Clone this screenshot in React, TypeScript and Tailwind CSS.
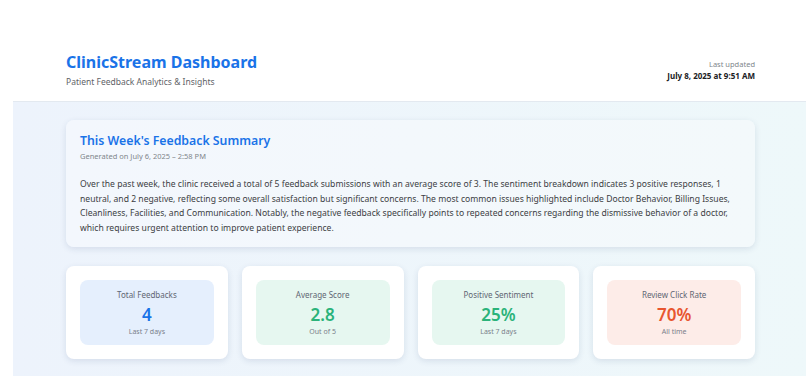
import React from "react";

const font = { fontFamily: '"Noto Sans", "Open Sans", sans-serif' };

function Stat({ label, value, sub, box, color }: { label: string; value: string; sub: string; box: string; color: string }) {
  return (
    <div className="bg-white rounded-lg shadow-[0_2px_6px_rgba(30,60,110,0.12)] p-[14px]">
      <div className={`${box} rounded-lg h-[65px] flex flex-col items-center justify-center`}>
        <div className="text-[8px] text-[#5f6673] leading-[10px]">{label}</div>
        <div className={`${color} text-[17px] font-semibold leading-[22px] mt-[4px]`}>{value}</div>
        <div className="text-[7px] text-[#7a808a] leading-[9px] mt-[1px]">{sub}</div>
      </div>
    </div>
  );
}

export default function App() {
  return (
    <div className="w-[806px] h-[386px] bg-white overflow-hidden" style={font}>
      <header className="h-[101px] flex items-end justify-between pl-[66px] pr-[51px] pb-[13px]">
        <div>
          <h1 className="text-[16px] font-bold text-[#1a73e8] leading-[22px]">ClinicStream Dashboard</h1>
          <p className="text-[8.5px] text-[#5f6368] leading-[12px] mt-[3px]">Patient Feedback Analytics &amp; Insights</p>
        </div>
        <div className="text-right pb-[7px]">
          <div className="text-[7.5px] text-[#80868b] leading-[11px]">Last updated</div>
          <div className="text-[8px] font-bold text-[#202124] leading-[11px]">July 8, 2025 at 9:51 AM</div>
        </div>
      </header>
      <main className="ml-[13px] h-[275px] bg-gradient-to-r from-[#edf3fc] to-[#eef8fa] border-t border-[#e3e9f0] pt-[18px] pl-[53px] pr-[51px]">
        <section className="rounded-lg bg-gradient-to-r from-[#f3f7fd] to-[#f3f9fb] shadow-[0_2px_6px_rgba(30,60,110,0.12)] px-[14px] pt-[12px] pb-[12px] h-[127px]">
          <h2 className="text-[12.3px] font-semibold text-[#1a73e8] leading-[18px]">This Week's Feedback Summary</h2>
          <p className="text-[7.5px] text-[#80868b] leading-[11px] mt-[1px]">Generated on July 6, 2025 – 2:58 PM</p>
          <p className="text-[8.6px] text-[#3c4043] leading-[14.5px] mt-[15px]">
            Over the past week, the clinic received a total of 5 feedback submissions with an average score of 3. The sentiment breakdown indicates 3 positive responses, 1 neutral, and 2 negative, reflecting some overall satisfaction but significant concerns. The most common issues highlighted include Doctor Behavior, Billing Issues, Cleanliness, Facilities, and Communication. Notably, the negative feedback specifically points to repeated concerns regarding the dismissive behavior of a doctor, which requires urgent attention to improve patient experience.
          </p>
        </section>
        <div className="grid grid-cols-4 gap-[14px] mt-[19px]">
          <Stat label="Total Feedbacks" value="4" sub="Last 7 days" box="bg-[#e5effd]" color="text-[#1a73e8]" />
          <Stat label="Average Score" value="2.8" sub="Out of 5" box="bg-[#e6f7f0]" color="text-[#2bb37a]" />
          <Stat label="Positive Sentiment" value="25%" sub="Last 7 days" box="bg-[#e6f7f0]" color="text-[#2bb37a]" />
          <Stat label="Review Click Rate" value="70%" sub="All time" box="bg-[#fdece8]" color="text-[#e8552f]" />
        </div>
      </main>
    </div>
  );
}
